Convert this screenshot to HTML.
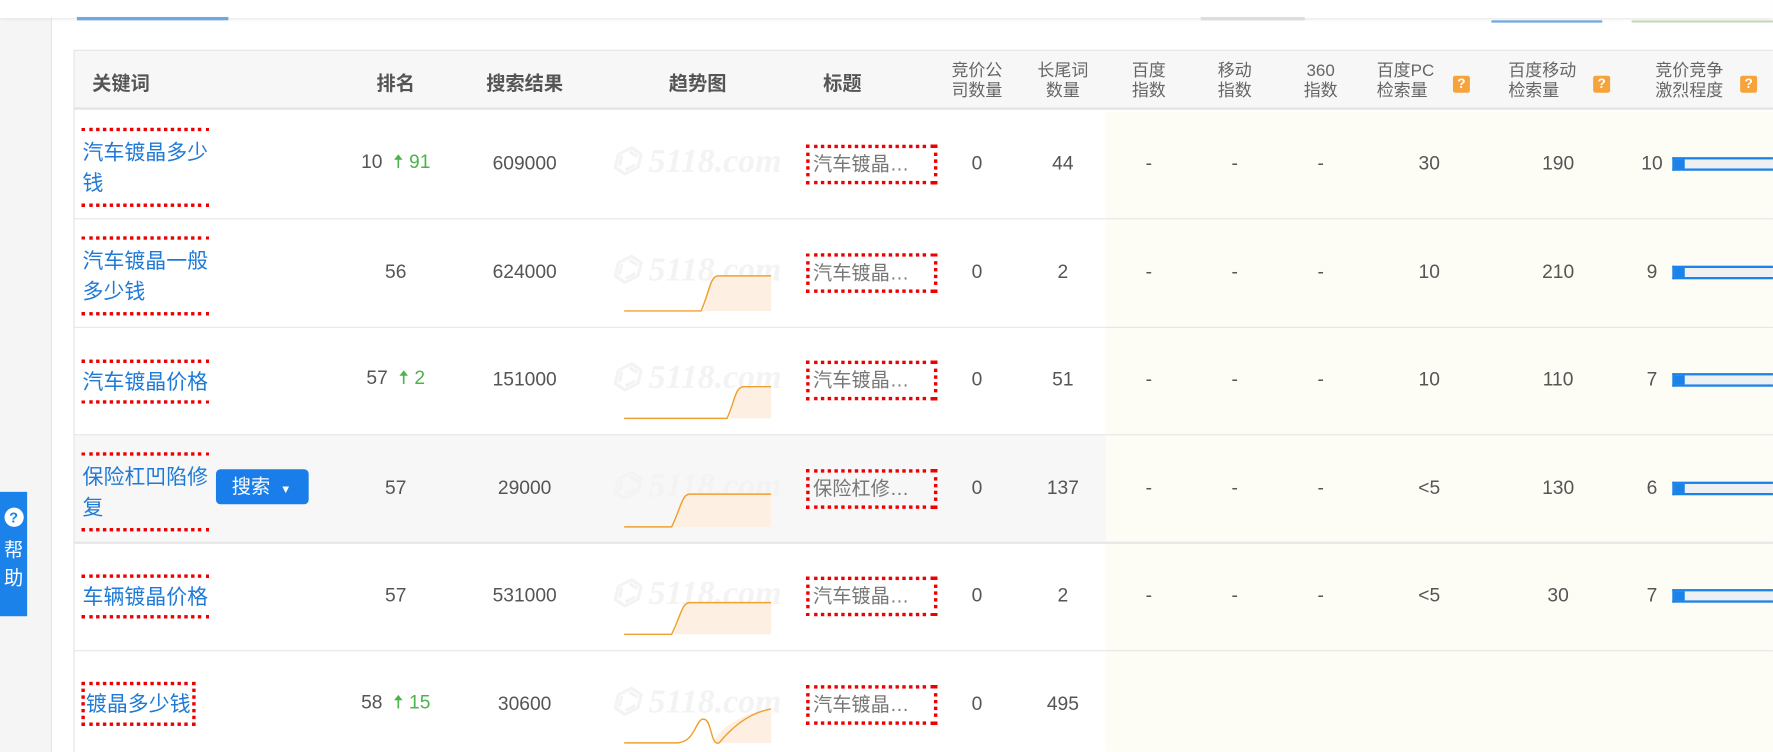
<!DOCTYPE html>
<html><head><meta charset="utf-8"><style>
*{margin:0;padding:0;box-sizing:border-box}
body{width:1773px;height:752px;overflow:hidden;background:#fff;font-family:"Liberation Sans","Noto Sans CJK SC",sans-serif;color:#666;position:relative}
#w{position:absolute;left:0;top:0;width:1568px;height:665px;transform:scale(1.1307);transform-origin:0 0;overflow:hidden}
.a{position:absolute}
.c{position:absolute;transform:translate(-50%,-50%);white-space:nowrap;font-size:17px;color:#555}
.h{position:absolute;transform:translate(-50%,-50%);font-size:17px;font-weight:bold;color:#555;white-space:nowrap}
.h2{position:absolute;font-size:15px;color:#666;line-height:18px;text-align:center;transform:translateX(-50%)}
.q{display:inline-block;width:15px;height:15px;background:#f5a33a;color:#fff;font-size:12px;font-weight:bold;line-height:15px;text-align:center;border-radius:2px;position:absolute}
.kw{position:absolute;left:72px;font-size:18.5px;color:#1f7ad6;line-height:27px;border-top:3px dotted #e00;border-bottom:3px dotted #e00;padding:5px 1px}
.tt{position:absolute;left:713px;width:113px;height:35px;border:3px dotted #e00;border-right:none;font-size:17px;color:#777;line-height:29px;padding-left:3px;white-space:nowrap}
.tt:after{content:"";position:absolute;right:-3px;top:-3px;height:35px;border-right:3px dotted #e00}
.up{color:#4bb34b}
.wm{position:absolute;left:540px;font-size:30px;font-style:italic;font-weight:bold;color:#f3f3f3;font-family:"Liberation Serif",serif;white-space:nowrap}
.bar{position:absolute;left:1479px;width:300px;height:12px;background:#eef0f3;border:2px solid #1a82e8;border-right:none}
.bar i{display:block;width:9px;height:100%;background:#1a82e8}
</style></head><body><div id="w">
<div class="a" style="left:0;top:0;width:46px;height:665px;background:#f5f5f5;border-right:1px solid #e5e5e5"></div>
<div class="a" style="left:0;top:0;width:1568px;height:16px;background:#fff;box-shadow:0 1px 3px #ddd"></div>
<div class="a" style="left:68px;top:15px;width:134px;height:3px;background:#6fa8e0"></div>
<div class="a" style="left:1062px;top:15px;width:92px;height:3px;background:#ddd"></div>
<div class="a" style="left:1319px;top:18px;width:98px;height:2px;background:#6fa8e0"></div>
<div class="a" style="left:1443px;top:18px;width:125px;height:2px;background:#c8d8c0"></div>
<div class="a" style="left:0;top:435px;width:24px;height:110px;background:#1a82e8;color:#fff;font-size:17px;text-align:center">
<div style="width:17px;height:17px;border-radius:50%;background:#fff;color:#1a82e8;font-weight:bold;font-size:13px;line-height:17px;margin:14px auto 6px">?</div>帮<br>助</div>
<div class="a" style="left:65px;top:44px;width:1503px;height:621px;border-left:1px solid #e3e3e3;border-top:1px solid #e3e3e3"></div>
<div class="a" style="left:66px;top:45px;width:1502px;height:52px;background:#f7f7f7;border-bottom:2px solid #e3e3e3"></div>
<div class="a" style="left:978px;top:99px;width:590px;height:566px;background:#fdfdf6"></div>
<div class="a" style="left:66px;top:385px;width:912px;height:94px;background:#f7f7f7"></div>
<div class="a" style="left:66px;top:193px;width:1502px;height:1px;background:#e6e6e6"></div>
<div class="a" style="left:66px;top:289px;width:1502px;height:1px;background:#e6e6e6"></div>
<div class="a" style="left:66px;top:384px;width:1502px;height:1px;background:#e6e6e6"></div>
<div class="a" style="left:66px;top:479px;width:1502px;height:2px;background:#e6e6e6"></div>
<div class="a" style="left:66px;top:575px;width:1502px;height:1px;background:#e6e6e6"></div>
<div class="h" style="left:107px;top:72px">关键词</div>
<div class="h" style="left:350px;top:72px">排名</div>
<div class="h" style="left:464px;top:72px">搜索结果</div>
<div class="h" style="left:617px;top:72px">趋势图</div>
<div class="h" style="left:745px;top:72px">标题</div>
<div class="h2" style="left:864px;top:54px">竞价公<br>司数量</div>
<div class="h2" style="left:940px;top:54px">长尾词<br>数量</div>
<div class="h2" style="left:1016px;top:54px">百度<br>指数</div>
<div class="h2" style="left:1092px;top:54px">移动<br>指数</div>
<div class="h2" style="left:1168px;top:54px">360<br>指数</div>
<div class="h2" style="left:1243px;top:54px;text-align:left">百度PC<br>检索量</div><span class="q" style="left:1285px;top:67px">?</span>
<div class="h2" style="left:1364px;top:54px;text-align:left">百度移动<br>检索量</div><span class="q" style="left:1409px;top:67px">?</span>
<div class="h2" style="left:1494px;top:54px;text-align:left">竞价竞争<br>激烈程度</div><span class="q" style="left:1539px;top:67px">?</span>

<div class="kw" style="top:113px">汽车镀晶多少<br>钱</div>
<div class="kw" style="top:209px">汽车镀晶一般<br>多少钱</div>
<div class="kw" style="top:318px;padding:3px 1px">汽车镀晶价格</div>
<div class="kw" style="top:400px">保险杠凹陷修<br>复</div>
<div class="kw" style="top:508px;padding:3px 1px">车辆镀晶价格</div>
<div class="kw" style="top:603px;padding:3px 1px;border:3px dotted #e00;left:72px">镀晶多少钱</div>
<div class="a" style="left:191px;top:415px;width:82px;height:31px;background:#1a7eea;border-radius:4px;color:#fff;font-size:17px;line-height:31px;padding-left:14px">搜索 <span style="font-size:10px;margin-left:4px">▼</span></div>

<div class="c" style="left:350px;top:145px">10 <span class="up">&nbsp;🠅 91</span></div>
<div class="c" style="left:350px;top:241px">56</div>
<div class="c" style="left:350px;top:336px">57 <span class="up">&nbsp;🠅 2</span></div>
<div class="c" style="left:350px;top:432px">57</div>
<div class="c" style="left:350px;top:527px">57</div>
<div class="c" style="left:350px;top:623px">58 <span class="up">&nbsp;🠅 15</span></div>

<div class="c" style="left:464px;top:145px">609000</div>
<div class="c" style="left:464px;top:241px">624000</div>
<div class="c" style="left:464px;top:336px">151000</div>
<div class="c" style="left:464px;top:432px">29000</div>
<div class="c" style="left:464px;top:527px">531000</div>
<div class="c" style="left:464px;top:623px">30600</div>

<div class="wm" style="top:125px">⌬ 5118.com</div>
<div class="wm" style="top:221px">⌬ 5118.com</div>
<div class="wm" style="top:316px">⌬ 5118.com</div>
<div class="wm" style="top:412px">⌬ 5118.com</div>
<div class="wm" style="top:507px">⌬ 5118.com</div>
<div class="wm" style="top:603px">⌬ 5118.com</div>
<svg class="a" style="left:0;top:0" width="1568" height="665">
<g fill="#fdf0e3" stroke="none">
<path d="M622 275 C627 260 628 244 635 244 L682 244 L682 275Z"/>
<path d="M645 370 C650 355 650 342 658 342 L682 342 L682 370Z"/>
<path d="M596 466 C602 450 603 437 610 437 L682 437 L682 466Z"/>
<path d="M596 561 C602 545 603 533 610 533 L682 533 L682 561Z"/>
<path d="M630 657 C640 640 660 630 682 627 L682 657Z"/>
</g>
<g fill="none" stroke="#f0a030" stroke-width="1.3">
<path d="M552 275 L620 275 C627 260 628 244 635 244 L682 244"/>
<path d="M552 370 L643 370 C650 355 650 342 658 342 L682 342"/>
<path d="M552 466 L594 466 C602 450 603 437 610 437 L682 437"/>
<path d="M552 561 L594 561 C602 545 603 533 610 533 L682 533"/>
<path d="M552 657 L598 657 C615 657 615 636 622 636 C630 636 628 660 636 657 C650 640 665 630 682 627"/>
</g>
</svg>

<div class="tt" style="top:128px">汽车镀晶…</div>
<div class="tt" style="top:224px">汽车镀晶…</div>
<div class="tt" style="top:319px">汽车镀晶…</div>
<div class="tt" style="top:415px">保险杠修…</div>
<div class="tt" style="top:510px">汽车镀晶…</div>
<div class="tt" style="top:606px">汽车镀晶…</div>

<div class="c" style="left:864px;top:145px">0</div><div class="c" style="left:940px;top:145px">44</div>
<div class="c" style="left:864px;top:241px">0</div><div class="c" style="left:940px;top:241px">2</div>
<div class="c" style="left:864px;top:336px">0</div><div class="c" style="left:940px;top:336px">51</div>
<div class="c" style="left:864px;top:432px">0</div><div class="c" style="left:940px;top:432px">137</div>
<div class="c" style="left:864px;top:527px">0</div><div class="c" style="left:940px;top:527px">2</div>
<div class="c" style="left:864px;top:623px">0</div><div class="c" style="left:940px;top:623px">495</div>

<div class="c" style="left:1016px;top:145px">-</div><div class="c" style="left:1092px;top:145px">-</div><div class="c" style="left:1168px;top:145px">-</div><div class="c" style="left:1264px;top:145px">30</div><div class="c" style="left:1378px;top:145px">190</div><div class="c" style="left:1461px;top:145px">10</div><div class="bar" style="top:139px"><i></i></div>
<div class="c" style="left:1016px;top:241px">-</div><div class="c" style="left:1092px;top:241px">-</div><div class="c" style="left:1168px;top:241px">-</div><div class="c" style="left:1264px;top:241px">10</div><div class="c" style="left:1378px;top:241px">210</div><div class="c" style="left:1461px;top:241px">9</div><div class="bar" style="top:235px"><i></i></div>
<div class="c" style="left:1016px;top:336px">-</div><div class="c" style="left:1092px;top:336px">-</div><div class="c" style="left:1168px;top:336px">-</div><div class="c" style="left:1264px;top:336px">10</div><div class="c" style="left:1378px;top:336px">110</div><div class="c" style="left:1461px;top:336px">7</div><div class="bar" style="top:330px"><i></i></div>
<div class="c" style="left:1016px;top:432px">-</div><div class="c" style="left:1092px;top:432px">-</div><div class="c" style="left:1168px;top:432px">-</div><div class="c" style="left:1264px;top:432px">&lt;5</div><div class="c" style="left:1378px;top:432px">130</div><div class="c" style="left:1461px;top:432px">6</div><div class="bar" style="top:426px"><i></i></div>
<div class="c" style="left:1016px;top:527px">-</div><div class="c" style="left:1092px;top:527px">-</div><div class="c" style="left:1168px;top:527px">-</div><div class="c" style="left:1264px;top:527px">&lt;5</div><div class="c" style="left:1378px;top:527px">30</div><div class="c" style="left:1461px;top:527px">7</div><div class="bar" style="top:521px"><i></i></div>
</div></body></html>
